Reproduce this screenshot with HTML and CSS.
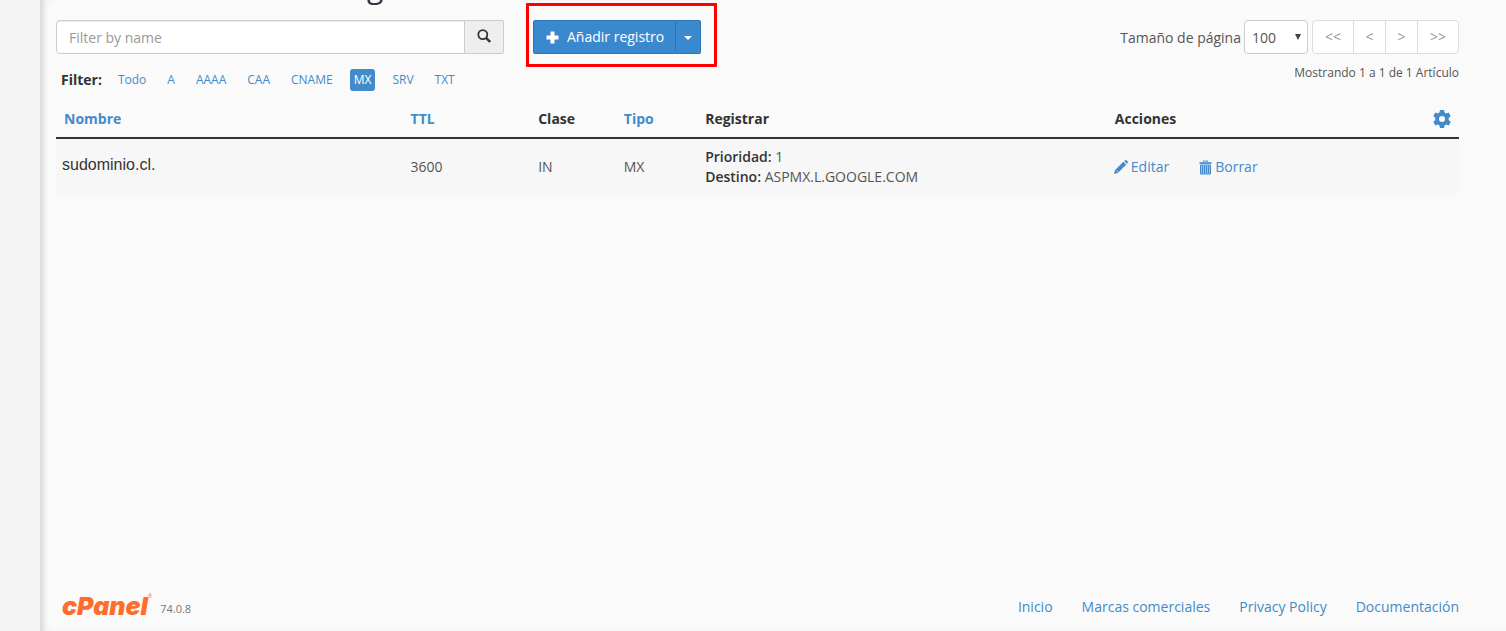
FILE: index.html
```html
<!DOCTYPE html>
<html lang="es">
<head>
<meta charset="utf-8">
<title>Zone Editor</title>
<link rel="stylesheet" href="styles.css">
</head>
<body>
<div class="app">
  <div class="sidebar"></div>
  <main class="content">
    <h1 class="heading">g</h1>
    <div class="toolbar">
      <form class="search">
        <input class="search-input" type="text" placeholder="Filter by name" aria-label="Filter by name">
        <button class="search-button" type="button" aria-label="Buscar">
          <svg width="14" height="14" viewBox="0 0 14 14" fill="none" stroke="#333"><circle cx="5.8" cy="5.6" r="4.5" stroke-width="1.8"/><path d="M9 8.8l4.2 4.2" stroke-width="2.4"/></svg>
        </button>
      </form>
      <div class="add-group">
        <button class="add-button" type="button">
          <svg width="13" height="13" viewBox="0 0 13 13" fill="#fff"><path d="M5 .5h3q.5 0 .5.5v3.500h3.500q.5 0 .5.5v3q0 .5-.5.5H8.500V12q0 .5-.5.5H5q-.5 0-.5-.5V8.500H1q-.5 0-.5-.5V5q0-.5.5-.5h3.500V1q0-.5.5-.5z"/></svg>
          Añadir registro
        </button>
        <button class="add-toggle" type="button" aria-label="Más opciones"><svg width="8" height="4" viewBox="0 0 8 4" fill="#fff"><path d="M0 0h8L4 4z"/></svg></button>
        <span class="highlight"></span>
      </div>
      <div class="paging">
        <label for="size">Tamaño de página</label>
        <div class="select-wrap">
          <select id="size" class="size"><option>100</option></select>
          <svg class="select-arrow" width="6" height="6" viewBox="0 0 6 6" fill="#444"><path d="M0 0h6L3 6z"/></svg>
        </div>
        <div class="pager">
          <button type="button" class="wide">&lt;&lt;</button><button type="button">&lt;</button><button type="button">&gt;</button><button type="button" class="wide">&gt;&gt;</button>
        </div>
      </div>
    </div>
    <div class="subbar">
      <div class="filters">
        <strong>Filter:</strong>
        <a href="#">Todo</a><a href="#">A</a><a href="#">AAAA</a><a href="#">CAA</a><a href="#">CNAME</a><a href="#" class="active">MX</a><a href="#">SRV</a><a href="#">TXT</a>
      </div>
      <div class="count">Mostrando 1 a 1 de 1 Artículo</div>
    </div>
    <table class="records">
      <colgroup><col class="c-name"><col class="c-ttl"><col class="c-class"><col class="c-type"><col class="c-record"><col></colgroup>
      <thead>
        <tr>
          <th><a href="#">Nombre</a></th><th><a href="#">TTL</a></th><th>Clase</th><th><a href="#">Tipo</a></th><th>Registrar</th>
          <th><div class="actions-head">Acciones
            <button class="gear" type="button" aria-label="Configuración"><svg width="18" height="18" viewBox="0 0 18 18" fill="#428bca"><path fill-rule="evenodd" d="M7 0h4l.6 2.600 1.500.9 2.600-.9 2 3.500-2 1.900v2l2 1.900-2 3.500-2.600-.9-1.500.9L11 18H7l-.6-2.600-1.500-.9-2.600.9-2-3.500 2-1.900V8l-2-1.900 2-3.500 2.600.9 1.500-.9zM9 6a3 3 0 100 6 3 3 0 000-6z"/></svg></button></div></th>
        </tr>
      </thead>
      <tbody>
        <tr>
          <td class="domain">sudominio.cl.</td><td>3600</td><td>IN</td><td>MX</td>
          <td><div><b>Prioridad:</b> 1</div><div><b>Destino:</b> ASPMX.L.GOOGLE.COM</div></td>
          <td class="actions-cell"><div class="actions">
            <a href="#"><svg width="14" height="14" viewBox="0 0 14 14" fill="#428bca"><path d="M0 14l1-4 1.200-.1.400 1.400 1.400.4L4 13zM1.500 9.500l7.900-7.800 2.900 2.900-7.900 7.900-.5-1.500-1.500-.4zM10.200 1L11 .3q.7-.6 1.400 0L13.700 1.600q.6.7 0 1.400l-.7.800z"/></svg>Editar</a>
            <a href="#"><svg width="13" height="15" viewBox="0 0 13 15"><path d="M.5 2h3.500V.500h5V2h3.500v2H.5zM5 1.500V2h3v-.5z" fill="#428bca" fill-rule="evenodd" opacity=".85"/><path d="M1.500 5h10v9h-10z" fill="#9cc3e6" stroke="#428bca"/><path d="M3.500 6v7M5.500 6v7M7.500 6v7M9.500 6v7" stroke="#428bca"/></svg>Borrar</a>
          </div></td>
        </tr>
      </tbody>
    </table>
    <footer class="footer">
      <div class="brand"><span class="logo">cPanel</span><sup class="mark">®</sup><span class="version">74.0.8</span></div>
      <nav class="links"><a href="#">Inicio</a><a href="#">Marcas comerciales</a><a href="#">Privacy Policy</a><a href="#">Documentación</a></nav>
    </footer>
  </main>
</div>
</body>
</html>
```
FILE: styles.css
```css
* { box-sizing: border-box; }
body { margin: 0; background: #fafafa; color: #555; font: 14px/20px "Open Sans", sans-serif; }
a { color: #428bca; text-decoration: none; }
button, input, select { font: inherit; margin: 0; }
svg { display: block; flex: none; }
.app { display: flex; min-height: 100vh; }
.sidebar { width: 40px; flex: none; background: #f4f4f4; }
.content { flex: 1; min-width: 0; display: flex; flex-direction: column; padding: 0 47px 11px 13px; border-left: 3px solid #dfdfdf; box-shadow: inset 5px 0 6px -4px #ddd; overflow: hidden; }
.heading { margin: 0 0 0 311px; height: 20px; display: flex; align-items: flex-end; padding-bottom: 17px; color: #333; font-size: 30px; font-weight: 400; line-height: 33px; }
.toolbar { display: flex; height: 34px; }
.search { display: flex; width: 448px; }
.search-input { flex: 1; min-width: 0; padding: 2px 12px 0; border: 1px solid #ccc; border-radius: 4px 0 0 4px; background: #fff; box-shadow: inset 0 1px 1px #ececec; color: #555; }
.search-input::placeholder { color: #999; opacity: 1; }
.search-button { width: 39px; display: flex; align-items: center; justify-content: center; padding: 0 0 2px; background: #eee; border: 1px solid #ccc; border-left: 0; border-radius: 0 2px 2px 0; }
.add-group { position: relative; display: flex; margin-left: 29px; }
.add-button, .add-toggle { display: flex; align-items: center; background: #3a89cf; border: 1px solid #2c74b3; color: #fff; }
.add-button { gap: 8px; padding: 0 11px 0 12px; border-radius: 2px 0 0 2px; }
.add-toggle { width: 25px; padding: 2px 0 0; justify-content: center; border-left: 0; border-radius: 0 2px 2px 0; }
.highlight { position: absolute; inset: -17px -16px -13px -7px; border: 3px solid #f00; border-radius: 1px; pointer-events: none; }
.paging { display: flex; align-items: center; margin-left: auto; }
.paging label { padding-top: 2px; }
.select-wrap { position: relative; margin: 0 4px 0 3px; }
.size { appearance: none; display: block; width: 64px; height: 34px; padding: 2px 7px 0; background: #fff; border: 1px solid #ccc; border-radius: 4px; color: #555; }
.select-arrow { position: absolute; right: 7px; top: 14px; pointer-events: none; }
.pager { display: flex; }
.pager button { width: 33px; height: 34px; padding: 0; margin-left: -1px; border: 1px solid #ddd; background: #fff; color: #999; }
.pager .wide { width: 42px; }
.pager button:first-child { margin-left: 0; border-radius: 4px 0 0 4px; }
.pager button:last-child { border-radius: 0 4px 4px 0; }
.subbar { display: flex; justify-content: space-between; padding-top: 8px; height: 45px; font-size: 12px; }
.filters { display: flex; align-items: center; height: 36px; padding-left: 5px; }
.filters strong { margin-right: 12px; color: #333; font-size: 14px; }
.filters a { padding: 1px 4px; margin-right: 13px; border-radius: 3px; }
.filters .active { background: #428bca; color: #fff; }
.count { padding-top: 1px; }
.records { width: 100%; table-layout: fixed; border-collapse: collapse; }
.c-name { width: 24.700%; }
.c-ttl { width: 9.100%; }
.c-class { width: 6.100%; }
.c-type { width: 5.800%; }
.c-record { width: 29.200%; }
.records th { height: 39px; padding: 1px 8px 0; border-bottom: 2px solid #333; color: #333; text-align: left; font-weight: 700; }
.records td { height: 57px; padding: 8px; background: #f7f7f7; }
.records .domain { padding: 4px 6px 8px; color: #333; font: 16px/20px "Liberation Sans Narrow", "Liberation Sans", sans-serif; }
.records .actions-cell { padding-left: 7px; }
.records b { color: #333; font-weight: 600; }
.actions-head { display: flex; justify-content: space-between; align-items: center; }
.gear { padding: 0; border: 0; background: none; }
.actions { display: flex; gap: 30px; }
.actions a { display: flex; align-items: center; gap: 3px; }
.footer { display: flex; justify-content: space-between; align-items: center; margin-top: auto; padding-left: 6px; height: 26px; }
.brand { display: flex; align-items: center; }
.logo { padding-bottom: 3px; color: #ff6c2c; font: italic 900 25px/26px Inter, sans-serif; }
.mark { align-self: flex-start; color: #ff6c2c; font-size: 5px; line-height: 6px; }
.version { margin-left: 8px; padding-top: 3px; color: #777; font-size: 11px; }
.links { display: flex; gap: 29px; }
```
